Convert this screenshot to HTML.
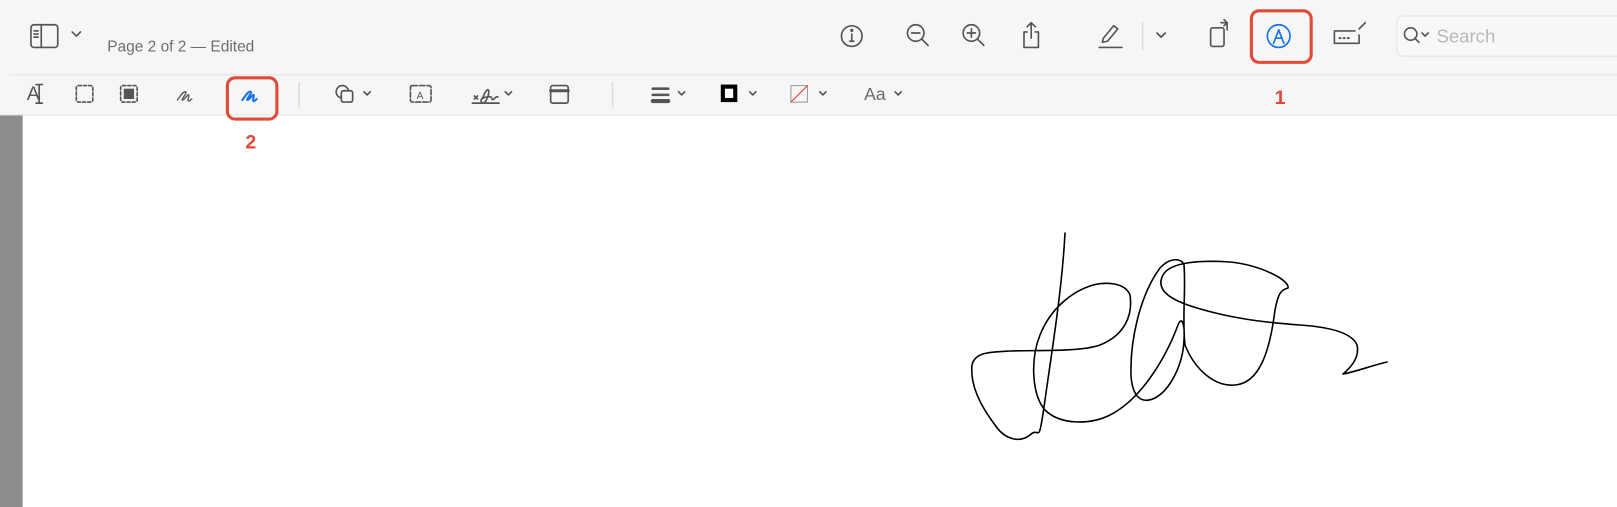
<!DOCTYPE html>
<html><head><style>
body{margin:0;width:1617px;height:492px;overflow:hidden;background:#fff;font-family:"Liberation Sans",sans-serif;position:relative}
#w{position:absolute;left:0;top:0;width:1568px;height:478px;transform:scale(1.0312);transform-origin:0 0}
.tb{position:absolute;left:0;top:0;width:1568px;height:111px;background:#f6f6f6;border-bottom:1px solid #e0e0e0}
.div{position:absolute;left:9px;top:72px;width:1560px;height:1px;background:#e3e3e3}
.strip{position:absolute;left:0;top:112px;width:22px;height:380px;background:#8c8c8c}
svg{position:absolute;left:0;top:0}
.t{position:absolute;color:#6e6e6e}
.red{position:absolute;border:3px solid #e04a3a;border-radius:9px}
.num{position:absolute;color:#e04a3a;font-weight:bold;font-size:19px}
</style></head><body>
<div id="w">
<div class="tb"></div><div class="div"></div><div class="strip"></div>
<div class="t" style="left:104px;top:37px;font-size:15px">Page 2 of 2 — Edited</div>
<div style="position:absolute;left:1354px;top:15px;width:280px;height:38px;border:1px solid #e2e2e2;border-radius:7px;background:#f8f8f8"></div>
<div class="t" style="left:1393px;top:25px;font-size:18px;color:#b8b8b8">Search</div>
<div class="t" style="left:838px;top:82px;font-size:17px;color:#6a6a6a">Aa</div>
<div class="t" style="left:26px;top:81px;font-size:19px;color:#555">A</div>
<div class="red" style="left:1212px;top:9px;width:55px;height:47px"></div>
<div class="red" style="left:219px;top:74px;width:45px;height:37px"></div>
<div class="num" style="left:1236px;top:85px">1</div>
<div class="num" style="left:238px;top:128px">2</div>
<svg width="1568" height="478" fill="none" stroke="#555" stroke-width="1.6" stroke-linecap="round" stroke-linejoin="round">
<rect x="30" y="24" width="26" height="22" rx="3"/><line x1="40" y1="24" x2="40" y2="46"/>
<path d="M33 30h4M33 33h4M33 36h4"/>
<path d="M70 31l4 4 4-4"/>
<circle cx="826" cy="35" r="10"/><path d="M826 33v7M824 40h4"/><circle cx="826" cy="29.5" r=".8" fill="#555"/>
<circle cx="888" cy="32" r="8"/><path d="M894 38l6 6M884 32h8"/>
<circle cx="942" cy="32" r="8"/><path d="M948 38l6 6M938 32h8M942 28v8"/>
<path d="M996 31h-3v15h14V31h-3M1000 22v15M996 26l4-4 4 4"/>
<path d="M1070 37l10-12 4 3-10 12-5 1zM1066 46h22"/>
<line x1="1108" y1="22" x2="1108" y2="48" stroke="#ddd"/>
<path d="M1122 32l4 4 4-4"/>
<rect x="1174" y="27" width="13" height="18" rx="2"/><path d="M1184 22h6v7M1187 19l3 3-3 3"/>
<circle cx="1240" cy="35" r="11" stroke="#1a73e8"/><path d="M1235 42l5-13 5 13M1237 37h6" stroke="#1a73e8"/>
<path d="M1294 30h20M1294 30v12h24v-8M1318 28l6-6"/><path d="M1299 37h1M1303 37h1M1307 37h1" stroke-width="2"/>
<circle cx="1368" cy="33" r="6"/><path d="M1372 37l4 4M1379 32l3 3 3-3"/>
<path d="M38 82v18M35 82h6M35 100h6"/>
<rect x="74" y="83" width="16" height="16" rx="2" stroke-dasharray="3 2"/>
<rect x="117" y="83" width="16" height="16" rx="2" stroke-dasharray="3 2"/><rect x="120" y="86" width="10" height="10" fill="#555" stroke="none"/>
<path d="M172 97c3-4 6-9 8-8s-5 8-3 8 5-6 6-5-2 6 0 6 2-2 3-2" stroke-width="1.3"/>
<path d="M235 97c3-4 6-9 8-8s-5 8-3 8 5-6 6-5-2 6 0 6 2-2 3-2" stroke="#1a73e8" stroke-width="2"/>
<line x1="290" y1="80" x2="290" y2="104" stroke="#ddd"/>
<circle cx="332" cy="89" r="6"/><rect x="331" y="88" width="11" height="11" rx="2" fill="#f6f6f6"/><path d="M353 89l3 3 3-3"/>
<rect x="398" y="83" width="20" height="16" rx="2" stroke-dasharray="5 2"/><text x="404" y="96" font-size="10" fill="#555" stroke="none" font-family="Liberation Sans">A</text>
<path d="M458 100h26M460 93l3 3M463 93l-3 3M468 95c3-8 6-10 6-6s-4 14-7 10 7-6 9-5 0 4 3 2 2-3 4-2"/><path d="M490 89l3 3 3-3"/>
<rect x="534" y="83" width="17" height="17" rx="2"/><line x1="534" y1="88" x2="551" y2="88" stroke-width="3"/>
<line x1="594" y1="80" x2="594" y2="104" stroke="#ddd"/>
<path d="M633 86h15M633 92h15" stroke-width="2.5"/><path d="M633 98h15" stroke-width="4"/><path d="M658 89l3 3 3-3"/>
<rect x="699" y="82" width="16" height="17" fill="#000" stroke="none"/><rect x="703" y="86" width="8" height="9" fill="#fff" stroke="none"/><path d="M727 89l3 3 3-3"/>
<rect x="767" y="83" width="16" height="16" stroke="#999" stroke-width="1"/><path d="M767 99l16-16" stroke="#e33" stroke-width="1"/><path d="M795 89l3 3 3-3"/>
<path d="M868 89l3 3 3-3"/>
</svg>
</div>
<svg width="1617" height="492" fill="none" stroke="#000" stroke-width="1.6" stroke-linecap="round" stroke-linejoin="round">
<path d="M1065,233 C1062,290 1052,350 1045,400 S1040,425 1030,435 C1020,443 1005,440 995,425 C980,405 970,385 972,365 C975,352 990,352 1010,351 C1040,350 1080,352 1100,345 C1125,335 1133,315 1130,295 C1125,282 1105,282 1093,285 C1070,292 1050,310 1040,335 C1030,360 1032,395 1045,410 C1060,425 1090,425 1110,415 C1140,400 1165,360 1178,325 C1182,315 1185,325 1184,340 C1183,365 1170,390 1155,398 C1140,405 1132,395 1131,375 C1130,340 1140,295 1160,268 C1170,257 1182,258 1184,265 C1186,290 1182,320 1185,345 C1195,370 1215,387 1235,385 C1260,383 1270,350 1275,310 C1278,295 1280,290 1288,288 C1290,280 1260,265 1230,262 C1200,260 1170,262 1163,275 C1155,290 1170,300 1197,308 C1230,318 1260,322 1300,325 C1330,327 1352,333 1357,345 C1360,358 1350,368 1343,374 C1355,372 1370,366 1387,362"/>
</svg>
</body></html>
